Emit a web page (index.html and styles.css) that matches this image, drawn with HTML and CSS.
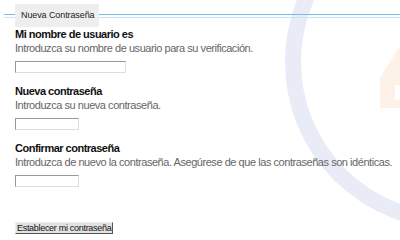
FILE: index.html
```html
<!doctype html>
<html lang="es">

<head>
    <meta charset="UTF-8" />
    <title>Nueva Contraseña</title>
    <link rel="stylesheet" href="styles.css">
</head>

<body>
    <svg class="watermark" width="400" height="240" viewBox="0 0 400 240">
        <circle cx="452" cy="62" r="159" fill="none" stroke="#e9ebf7" stroke-width="16" />
        <path d="M380 78 L400 46 L400 85 L395 85 L395 100 L400 100 L400 108 L380 108 Z" fill="#fdf1e8" />
    </svg>
    <form class="reset">
        <div class="reset__head">
            <span class="reset__legend">Nueva Contraseña</span>
        </div>
        <div class="reset__body">
            <div class="field">
                <label class="field__label">Mi nombre de usuario es</label>
                <p class="field__hint">Introduzca su nombre de usuario para su verificación.</p>
                <input class="field__input field__input--wide" type="text">
            </div>
            <div class="field">
                <label class="field__label">Nueva contraseña</label>
                <p class="field__hint">Introduzca su nueva contraseña.</p>
                <input class="field__input" type="password">
            </div>
            <div class="field">
                <label class="field__label">Confirmar contraseña</label>
                <p class="field__hint">Introduzca de nuevo la contraseña. Asegúrese de que las contraseñas son idénticas.</p>
                <input class="field__input" type="password">
            </div>
            <button class="submit" type="button">Establecer mi contraseña</button>
        </div>
    </form>
</body>

</html>
```

FILE: styles.css
```css
:root {
    --rule-blue: #78bbe8;
}

* {
    box-sizing: border-box;
}

body {
    margin: 0;
    padding-top: 4px;
    font-family: 'Liberation Sans', Arial, sans-serif;
    color: #111;
    background: white;
}

.watermark {
    position: absolute;
    top: 0;
    left: 0;
    z-index: -1;
}

.reset {
    margin: 0;
}

.reset__head {
    display: flex;
    align-items: center;
    padding-left: 4px;
}

.reset__head::before,
.reset__head::after {
    content: '';
    height: 2px;
    border-top: 1px solid var(--rule-blue);
    border-bottom: 1px solid #c8e3f6;
}

.reset__head::before {
    width: 11px;
}

.reset__head::after {
    flex: 1;
}

.reset__legend {
    padding: 6px 5px 6px 6px;
    background: #eeeeee;
    font-size: 9px;
    line-height: 11px;
    letter-spacing: -0.1px;
    color: #222;
}

.reset__body {
    padding-left: 15px;
}

.field {
    margin-bottom: 11px;
}

.field__label {
    display: block;
    font-size: 11px;
    line-height: 15px;
    letter-spacing: -0.5px;
    font-weight: bold;
}

.field__hint {
    margin: 0;
    font-size: 11px;
    line-height: 13px;
    letter-spacing: -0.45px;
    color: #666;
    white-space: nowrap;
}

.field__input {
    display: block;
    margin-top: 6px;
    width: 64px;
    height: 12px;
    padding: 0;
    border: 1px solid;
    border-color: #999 #ddd #ddd #999;
    background: white;
}

.field__input--wide {
    width: 111px;
}

.submit {
    display: block;
    margin-top: 35px;
    padding: 0 1px;
    height: 12px;
    font-family: inherit;
    font-size: 9px;
    line-height: 10px;
    letter-spacing: -0.3px;
    color: #111;
    background: #e2e2e2;
    border: 1px solid;
    border-color: #eee #555 #555 #eee;
}
```
